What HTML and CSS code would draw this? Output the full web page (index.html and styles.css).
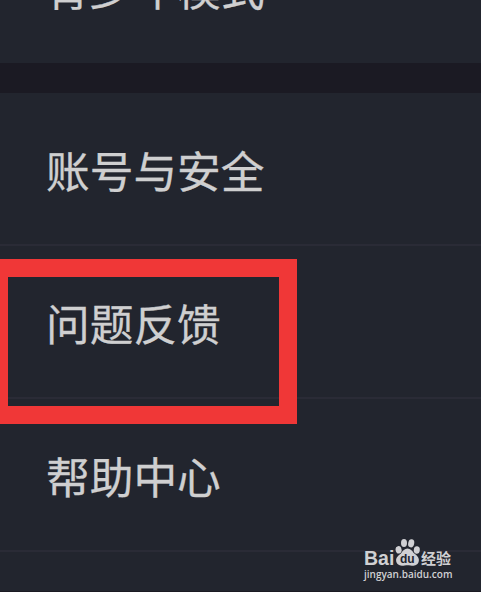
FILE: index.html
```
<!DOCTYPE html>
<html lang="zh-CN">
<head>
    <meta charset="UTF-8">
    <meta name="viewport" content="width=device-width, initial-scale=1.0">
    <title>设置</title>
    <link rel="stylesheet" href="styles.css">
</head>
<body>
    <div class="screen">
        <div class="group group-top">
            <div class="item">青少年模式</div>
        </div>
        <div class="group">
            <div class="item">账号与安全</div>
            <div class="item">问题反馈</div>
            <div class="item">帮助中心</div>
        </div>
        <div class="highlight"></div>
        <div class="watermark">
            <div class="brand">
                <span class="bai">Bai</span>
                <span class="paw">
                    <svg viewBox="0 0 26 28" width="26" height="28">
                        <ellipse cx="3.6" cy="11.8" rx="3" ry="3.7" transform="rotate(-12 3.6 11.8)"/>
                        <ellipse cx="9" cy="5" rx="3" ry="4.1"/>
                        <ellipse cx="16.2" cy="5.3" rx="3" ry="4.1" transform="rotate(12 16.2 5.3)"/>
                        <ellipse cx="21.8" cy="12" rx="3" ry="3.7" transform="rotate(8 21.8 12)"/>
                        <path d="M12.5 10.5c3 0 4.6 2.4 6.2 4.4 2.6 2.2 5.2 3.900 5.200 7.200 0 3.900-2.800 5.600-5.400 5.600-2.200 0-4-.5-6-.5s-3.400.5-5.600.5c-3 0-5.800-1.900-5.800-5.400 0-3.200 2.600-5 5.200-7.400 1.600-2 3.200-4.400 6.200-4.400z"/>
                    </svg>
                    <span class="du">du</span>
                </span>
                <span class="jingyan">经验</span>
            </div>
            <div class="site">jingyan.baidu.com</div>
        </div>
    </div>
</body>
</html>
```
FILE: styles.css
```
body {
    margin: 0;
    background: #22252e;
    color: #cfcfd0;
    font-family: "Noto Sans CJK SC", sans-serif;
}
.screen {
    position: relative;
    box-sizing: border-box;
    height: 592px;
    overflow: hidden;
    border-bottom: 1px solid #1b1a23;
}
.group-top {
    display: flex;
    align-items: flex-end;
    height: 63px;
    border-bottom: 30px solid #1b1a23;
}
.item {
    box-sizing: border-box;
    height: 153px;
    padding: 54px 0 0 46px;
    border-bottom: 2px solid #2a2b36;
    font-size: 43.7px;
    line-height: 44px;
    -webkit-text-stroke: 0.3px #cfcfd0;
}
.group-top .item {
    margin-bottom: -1px;
    border-bottom: none;
}
/* red frame around the feedback entry */
.highlight {
    position: absolute;
    left: -10px;
    top: 259px;
    box-sizing: border-box;
    width: 307px;
    height: 165px;
    border: 18px solid #f03737;
}
.watermark {
    position: absolute;
    left: 364px;
    top: 538px;
    width: 90px;
    color: #d0d0d3;
    font-family: "Open Sans", "Noto Sans CJK SC", sans-serif;
}
.brand {
    display: flex;
    align-items: flex-end;
    height: 28px;
}
.bai {
    width: 31px;
    font-family: "Liberation Sans", sans-serif;
    font-size: 19.5px;
    font-weight: bold;
    line-height: 16px;
}
.paw {
    position: relative;
    width: 26px;
    height: 28px;
}
.paw svg {
    display: block;
    fill: #d0d0d3;
}
.du {
    position: absolute;
    left: 5px;
    top: 15px;
    color: #22252e;
    font-family: "Liberation Sans", sans-serif;
    font-size: 12px;
    font-weight: bold;
    line-height: 12px;
}
.jingyan {
    font-family: "Noto Sans CJK SC", sans-serif;
    font-size: 15px;
    font-weight: bold;
    line-height: 17px;
}
.site {
    font-size: 10px;
    font-weight: 600;
    line-height: 16px;
}
```
